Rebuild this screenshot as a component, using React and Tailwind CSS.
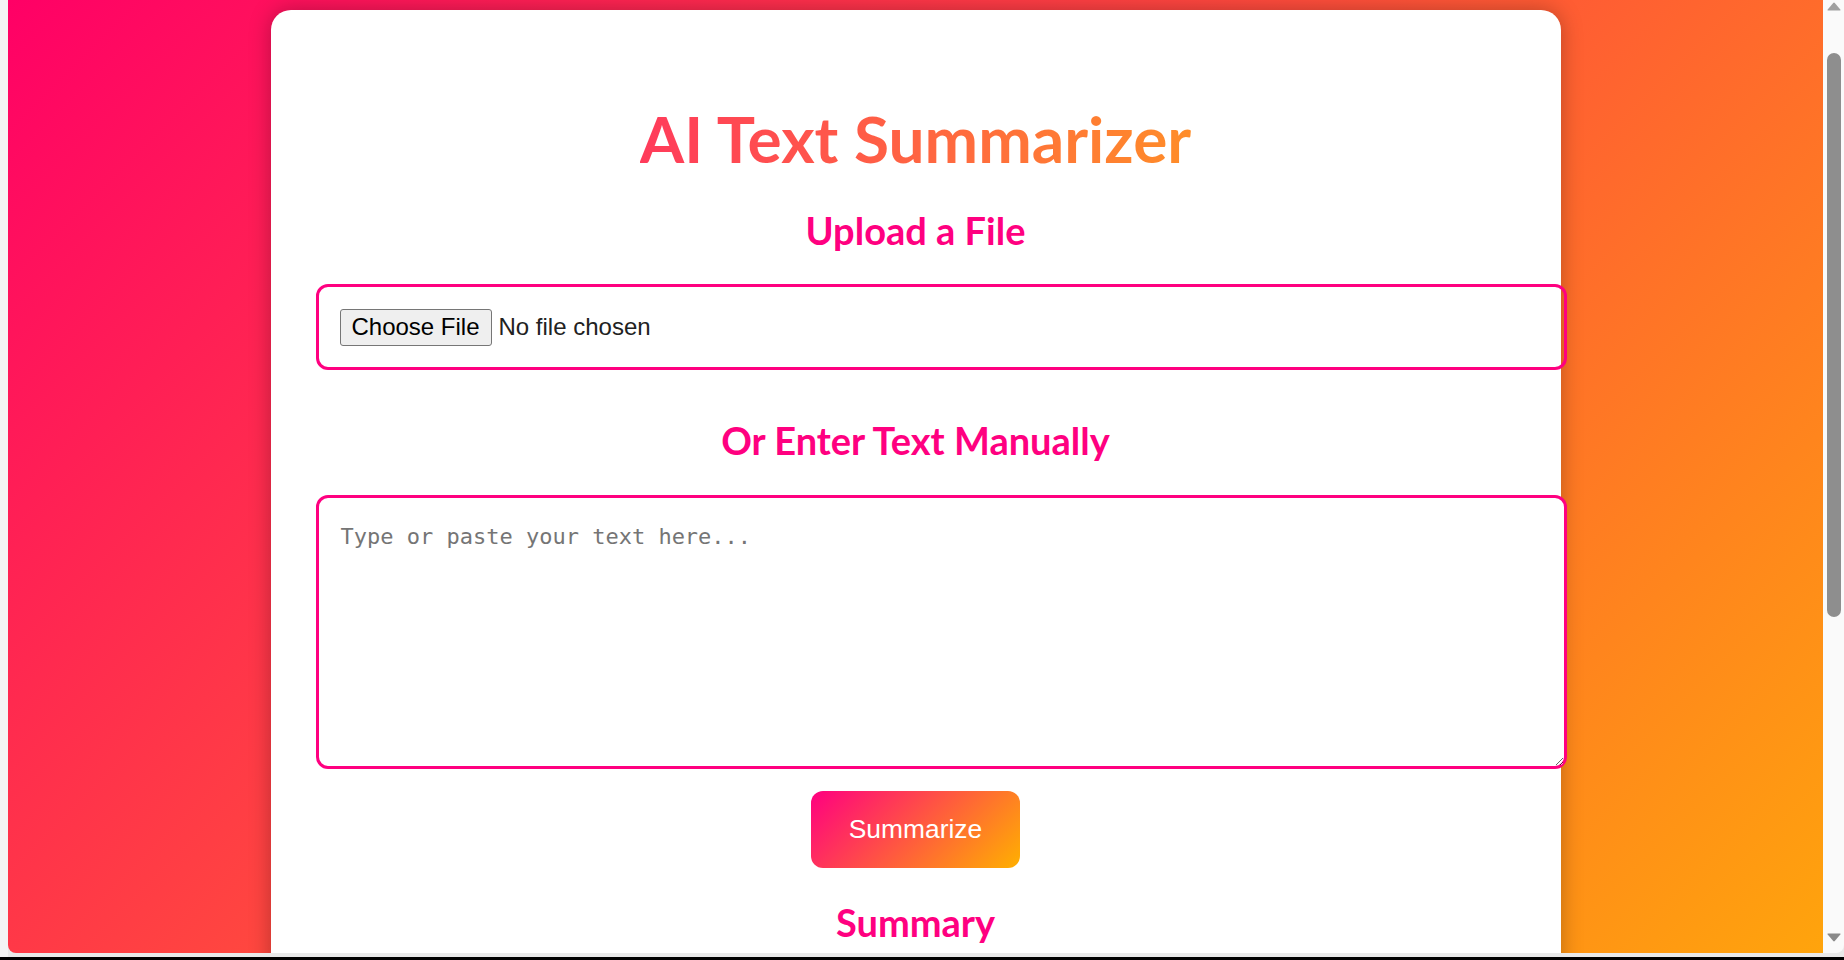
import React from "react";

function ScrollArrow({ down }) {
  return (
    <svg width="16" height="10" viewBox="0 0 16 10" className="block">
      {down ? (
        <path d="M2 1.5 H14 Q15 1.5 14.3 2.5 L8.8 9 Q8 9.8 7.2 9 L1.7 2.5 Q1 1.5 2 1.5 Z" fill="#8a8a8a" />
      ) : (
        <path d="M2 8.5 H14 Q15 8.5 14.3 7.5 L8.8 1 Q8 0.2 7.2 1 L1.7 7.5 Q1 8.5 2 8.5 Z" fill="#a0a0a0" />
      )}
    </svg>
  );
}

export default function App() {
  return (
    <div className="w-[1844px] h-[960px] bg-black overflow-hidden">
      <div className="h-[957px] bg-[#e9e9e9] flex">
        <div className="w-[8px] bg-[#f4f4f4]" />
        <div className="flex-1 flex h-[953px] rounded-b-[8px] overflow-hidden">
          <main className="flex-1 overflow-hidden bg-[linear-gradient(135deg,#ff0066,#ffa40c)]">
            <div className="mx-auto mt-[10px] w-[1290px] bg-white rounded-[20px] shadow-[0_0_22px_rgba(0,0,0,0.28)] px-[45px] pt-[97px] pb-[45px] flex flex-col items-center font-['Lato',sans-serif]">
              <h1 className="text-[64px] leading-none font-bold">
                <span className="inline-block bg-[linear-gradient(90deg,#ff3b5b,#ff8d29)] bg-clip-text text-transparent">
                  AI Text Summarizer
                </span>
              </h1>
              <h2 className="mt-[40px] text-[38px] leading-none font-bold text-[#ff0080]">
                Upload a File
              </h2>
              <label className="self-start mt-[35px] w-[1251px] h-[86px] shrink-0 border-[3px] border-[#ff0080] rounded-[12px] px-[21px] flex items-center font-['Liberation_Sans',Arial,sans-serif] text-[24px]">
                <span className="w-[152px] h-[37px] flex items-center justify-center border border-[#767676] rounded-[3px] bg-[#efefef] text-black leading-none">
                  Choose File
                </span>
                <span className="ml-[7px] text-[#222222] leading-none">No file chosen</span>
                <input type="file" className="hidden" />
              </label>
              <h2 className="mt-[51px] text-[38px] leading-none font-bold text-[#ff0080]">
                Or Enter Text Manually
              </h2>
              <textarea
                placeholder="Type or paste your text here..."
                className="self-start mt-[36px] block w-[1251px] h-[274px] shrink-0 border-[3px] border-[#ff0080] rounded-[12px] p-[22px] font-['DejaVu_Sans_Mono',monospace] text-[22px] text-[#222] placeholder:text-[#757575] outline-none bg-white"
              />
              <button className="mt-[22px] w-[209px] h-[77px] rounded-[12px] bg-[linear-gradient(135deg,#ff0080,#ffb000)] text-white font-['Liberation_Sans',Arial,sans-serif] text-[26.4px] leading-none flex items-center justify-center">
                Summarize
              </button>
              <h2 className="mt-[35px] text-[38px] leading-none font-bold text-[#ff0080]">
                Summary
              </h2>
              <div className="self-start mt-[30px] w-[1251px] h-[200px] shrink-0 border-[3px] border-[#ff0080] rounded-[12px]" />
            </div>
          </main>
          <div className="w-[21px] bg-[#fafafa] flex flex-col items-center">
            <div className="mt-[2px]">
              <ScrollArrow />
            </div>
            <div className="mt-[41px] w-[14px] h-[564px] rounded-full bg-[#8e8e8e]" />
            <div className="flex-1" />
            <div className="mb-[11px]">
              <ScrollArrow down />
            </div>
          </div>
        </div>
      </div>
    </div>
  );
}
